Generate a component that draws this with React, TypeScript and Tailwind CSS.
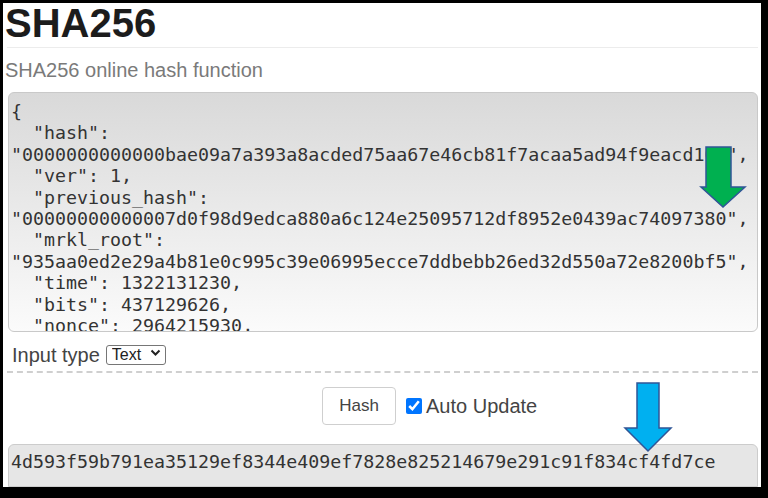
const jsonLines = [
  "{",
  '  "hash":',
  '"0000000000000bae09a7a393a8acded75aa67e46cb81f7acaa5ad94f9eacd103",',
  '  "ver": 1,',
  '  "previous_hash":',
  '"00000000000007d0f98d9edca880a6c124e25095712df8952e0439ac74097380",',
  '  "mrkl_root":',
  '"935aa0ed2e29a4b81e0c995c39e06995ecce7ddbebb26ed32d550a72e8200bf5",',
  '  "time": 1322131230,',
  '  "bits": 437129626,',
  '  "nonce": 2964215930,',
  '  "n_tx": 22,',
];

const mono = "font-['DejaVu_Sans_Mono',monospace]";

const App = () => {
  return (
    <div className="relative w-[768px] h-[498px] overflow-hidden bg-black pt-[3px] pl-[3px] pr-[7px] pb-[11px] font-['Liberation_Sans',Arial,sans-serif]">
      <div className="flex h-full flex-col bg-white">
        <h1 className="-mt-[3px] ml-[2px] text-[40px] leading-[46px] font-bold text-[#1c1c1c]">SHA256</h1>
        <div className="mt-[1px] ml-[4px] mr-[3px] h-px bg-[#ececec]" />
        <p className="mt-[10px] ml-[2px] text-[20px] leading-[24px] text-[#7a7a7a]">SHA256 online hash function</p>

        {/* input textarea */}
        <div className="mt-[10px] ml-[5px] mr-[3px] h-[240px] shrink-0 overflow-hidden rounded-[6px] border border-[#c9c9c9] bg-linear-to-b from-[#d9d9d9] to-[#fbfbfb] pt-[8px] pl-[2px]">
          <pre className={`${mono} text-[18.3px] leading-[21.4px] text-[#333]`}>{jsonLines.join("\n")}</pre>
        </div>

        <div className="mt-[11px] ml-[9px] flex items-center">
          <span className="text-[20px] leading-[24px] text-[#444]">Input type</span>
          <div className="relative ml-[6px]">
            <select className="h-[20px] w-[60px] appearance-none rounded-[3px] border border-[#767676] bg-white pl-[5px] text-[16px] leading-[18px] text-[#222]">
              <option>Text</option>
            </select>
            <svg className="pointer-events-none absolute right-[5px] top-[6px]" width="11" height="8" viewBox="0 0 11 8">
              <path d="M1.5 1.5 L5.5 5.5 L9.5 1.5" fill="none" stroke="#222" strokeWidth="2" />
            </svg>
          </div>
        </div>

        <div className="mt-[4px] ml-[4px] mr-[3px] border-t-2 border-dashed border-[#cfcfcf]" />

        <div className="mt-[14px] ml-[319px] flex items-center">
          <button className="h-[38px] w-[74px] rounded-[4px] border border-[#cfcfcf] bg-white text-[17px] text-[#444]">Hash</button>
          <input type="checkbox" defaultChecked className="ml-[10px] h-[16px] w-[16px] accent-[#0075ff]" />
          <span className="ml-[4px] text-[20px] leading-[24px] text-[#444]">Auto Update</span>
        </div>

        {/* output */}
        <div className="mt-[19px] ml-[5px] mr-[3px] flex-1 overflow-hidden rounded-t-[6px] border border-[#cccccc] bg-[#e6e6e6] pt-[6px] pl-[2px]">
          <pre className={`${mono} text-[18.3px] leading-[21.4px] text-[#333]`}>4d593f59b791ea35129ef8344e409ef7828e825214679e291c91f834cf4fd7ce</pre>
        </div>
      </div>

      {/* green arrow */}
      <svg className="absolute left-[698px] top-[144px]" width="52" height="66" viewBox="0 0 52 66">
        <path d="M8 3 H33 V43 H47 L25 63 L3 43 H8 Z" fill="#00b050" stroke="#2f5597" strokeWidth="1.5" strokeLinejoin="miter" />
      </svg>

      {/* blue arrow */}
      <svg className="absolute left-[622px] top-[380px]" width="52" height="74" viewBox="0 0 52 74">
        <path d="M15 3 H37 V48 H49 L26 71 L3 48 H15 Z" fill="#00b0f0" stroke="#2f5597" strokeWidth="1.5" strokeLinejoin="miter" />
      </svg>
    </div>
  );
};

export default App;
